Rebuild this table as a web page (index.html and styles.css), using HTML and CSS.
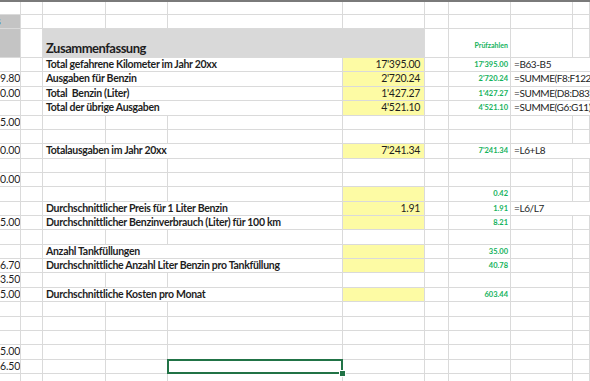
FILE: index.html
```html
<!DOCTYPE html>
<html lang="de">
<head>
    <meta charset="UTF-8">
    <title>Zusammenfassung</title>
    <link rel="stylesheet" href="styles.css">
</head>
<body>
    <div class="sheet">
        <div class="row">
            <div class="c"></div><div class="c"></div><div class="c"></div><div class="c"></div><div class="c"></div>
            <div class="c"></div><div class="c"></div><div class="c"></div><div class="c"></div><div class="c"></div>
        </div>
        <div class="row">
            <div class="c gray cut">s</div><div class="c"></div><div class="c"></div><div class="c"></div><div class="c"></div>
            <div class="c"></div><div class="c"></div><div class="c"></div><div class="c"></div><div class="c"></div>
        </div>
        <div class="row tall">
            <div class="c gray"></div><div class="c"></div>
            <div class="c span4 head">Zusammenfassung</div>
            <div class="c"></div><div class="c check small">Prüfzahlen</div><div class="c"></div><div class="c"></div>
        </div>

        <div class="row">
            <div class="c col-a"></div><div class="c"></div>
            <div class="c span3 label">Total gefahrene Kilometer im Jahr 20xx</div>
            <div class="c yellow num">17'395.00</div><div class="c"></div>
            <div class="c check">17'395.00</div><div class="c span2 formula">=B63-B5</div>
        </div>
        <div class="row">
            <div class="c col-a">9.80</div><div class="c"></div>
            <div class="c span3 label">Ausgaben für Benzin</div>
            <div class="c yellow num">2'720.24</div><div class="c"></div>
            <div class="c check">2'720.24</div><div class="c span2 formula">=SUMME(F8:F122)</div>
        </div>
        <div class="row">
            <div class="c col-a">0.00</div><div class="c"></div>
            <div class="c span3 label">Total&nbsp; Benzin (Liter)</div>
            <div class="c yellow num">1'427.27</div><div class="c"></div>
            <div class="c check">1'427.27</div><div class="c span2 formula">=SUMME(D8:D83)</div>
        </div>
        <div class="row">
            <div class="c col-a"></div><div class="c"></div>
            <div class="c span3 label">Total der übrige Ausgaben</div>
            <div class="c yellow num">4'521.10</div><div class="c"></div>
            <div class="c check">4'521.10</div><div class="c span2 formula">=SUMME(G6:G11)</div>
        </div>
        <div class="row">
            <div class="c col-a">5.00</div><div class="c"></div><div class="c"></div><div class="c"></div><div class="c"></div>
            <div class="c"></div><div class="c"></div><div class="c"></div><div class="c"></div><div class="c"></div>
        </div>
        <div class="row">
            <div class="c col-a"></div><div class="c"></div><div class="c"></div><div class="c"></div><div class="c"></div>
            <div class="c"></div><div class="c"></div><div class="c"></div><div class="c"></div><div class="c"></div>
        </div>
        <div class="row">
            <div class="c col-a">0.00</div><div class="c"></div>
            <div class="c span3 label">Totalausgaben im Jahr 20xx</div>
            <div class="c yellow num">7'241.34</div><div class="c"></div>
            <div class="c check">7'241.34</div><div class="c span2 formula">=L6+L8</div>
        </div>
        <div class="row">
            <div class="c col-a"></div><div class="c"></div><div class="c"></div><div class="c"></div><div class="c"></div>
            <div class="c"></div><div class="c"></div><div class="c"></div><div class="c"></div><div class="c"></div>
        </div>
        <div class="row">
            <div class="c col-a">0.00</div><div class="c"></div><div class="c"></div><div class="c"></div><div class="c"></div>
            <div class="c"></div><div class="c"></div><div class="c"></div><div class="c"></div><div class="c"></div>
        </div>
        <div class="row">
            <div class="c col-a"></div><div class="c"></div><div class="c"></div><div class="c"></div><div class="c"></div>
            <div class="c yellow"></div><div class="c"></div>
            <div class="c check">0.42</div><div class="c"></div><div class="c"></div>
        </div>
        <div class="row">
            <div class="c col-a"></div><div class="c"></div>
            <div class="c span3 label">Durchschnittlicher Preis für 1 Liter Benzin</div>
            <div class="c yellow num">1.91</div><div class="c"></div>
            <div class="c check">1.91</div><div class="c span2 formula">=L6/L7</div>
        </div>
        <div class="row">
            <div class="c col-a">5.00</div><div class="c"></div>
            <div class="c span3 label">Durchschnittlicher Benzinverbrauch (Liter) für 100 km</div>
            <div class="c yellow"></div><div class="c"></div>
            <div class="c check">8.21</div><div class="c"></div><div class="c"></div>
        </div>
        <div class="row">
            <div class="c col-a"></div><div class="c"></div><div class="c"></div><div class="c"></div><div class="c"></div>
            <div class="c"></div><div class="c"></div><div class="c"></div><div class="c"></div><div class="c"></div>
        </div>
        <div class="row">
            <div class="c col-a"></div><div class="c"></div>
            <div class="c span3 label">Anzahl Tankfüllungen</div>
            <div class="c yellow"></div><div class="c"></div>
            <div class="c check">35.00</div><div class="c"></div><div class="c"></div>
        </div>
        <div class="row">
            <div class="c col-a">6.70</div><div class="c"></div>
            <div class="c span3 label">Durchschnittliche Anzahl Liter Benzin pro Tankfüllung</div>
            <div class="c yellow"></div><div class="c"></div>
            <div class="c check">40.78</div><div class="c"></div><div class="c"></div>
        </div>
        <div class="row">
            <div class="c col-a">3.50</div><div class="c"></div><div class="c"></div><div class="c"></div><div class="c"></div>
            <div class="c"></div><div class="c"></div><div class="c"></div><div class="c"></div><div class="c"></div>
        </div>
        <div class="row">
            <div class="c col-a">5.00</div><div class="c"></div>
            <div class="c span3 label">Durchschnittliche Kosten pro Monat</div>
            <div class="c yellow"></div><div class="c"></div>
            <div class="c check">603.44</div><div class="c"></div><div class="c"></div>
        </div>
        <div class="row">
            <div class="c col-a"></div><div class="c"></div><div class="c"></div><div class="c"></div><div class="c"></div>
            <div class="c"></div><div class="c"></div><div class="c"></div><div class="c"></div><div class="c"></div>
        </div>
        <div class="row">
            <div class="c col-a"></div><div class="c"></div><div class="c"></div><div class="c"></div><div class="c"></div>
            <div class="c"></div><div class="c"></div><div class="c"></div><div class="c"></div><div class="c"></div>
        </div>
        <div class="row">
            <div class="c col-a"></div><div class="c"></div><div class="c"></div><div class="c"></div><div class="c"></div>
            <div class="c"></div><div class="c"></div><div class="c"></div><div class="c"></div><div class="c"></div>
        </div>
        <div class="row">
            <div class="c col-a">5.00</div><div class="c"></div><div class="c"></div><div class="c"></div><div class="c"></div>
            <div class="c"></div><div class="c"></div><div class="c"></div><div class="c"></div><div class="c"></div>
        </div>
        <div class="row">
            <div class="c col-a">6.50</div><div class="c"></div><div class="c"></div><div class="c"></div>
            <div class="c selected"><span class="handle"></span></div>
            <div class="c"></div><div class="c"></div><div class="c"></div><div class="c"></div><div class="c"></div>
        </div>
        <div class="row">
            <div class="c col-a"></div><div class="c"></div><div class="c"></div><div class="c"></div><div class="c"></div>
            <div class="c"></div><div class="c"></div><div class="c"></div><div class="c"></div><div class="c"></div>
        </div>
    </div>
</body>
</html>
```

FILE: styles.css
```css
body {
    margin: 0;
    background: white;
    font-family: Lato, "Open Sans", sans-serif;
    color: #1e1e1e;
    overflow: hidden;
}

.sheet {
    width: 590px;
    height: 381px;
    overflow: hidden;
    border-top: 2px solid #7a7a7a;
    box-sizing: border-box;
}

.row {
    display: grid;
    grid-template-columns: 21px 22px 63px 62px 175px 82px 24px 62px 62px 17px;
    height: 14.36px;
}

.row:first-child {
    height: 13px;
}

.row.tall {
    height: 28.72px;
}

.c {
    border-right: 1px solid #dadada;
    border-bottom: 1px solid #dadada;
    box-sizing: border-box;
    overflow: hidden;
    white-space: nowrap;
    font-size: 10.5px;
    letter-spacing: -0.3px;
    line-height: 13px;
    padding: 0 3px;
    position: relative;
}

.span2 { grid-column: span 2; }
.span3 { grid-column: span 3; }
.span4 { grid-column: span 4; }

.col-a {
    text-align: right;
    padding: 0 2px 0 0;
    letter-spacing: -0.1px;
}

.gray {
    background: #c4c4c4;
}

.cut {
    text-indent: -4px;
    padding: 0;
    color: #1f5fb8;
    font-weight: bold;
}

.head {
    background: #d9d9d9;
    font-size: 13px;
    letter-spacing: -0.5px;
    font-weight: bold;
    display: flex;
    align-items: flex-end;
    padding-bottom: 2px;
}

.label {
    font-weight: bold;
}

.yellow {
    background: #fdfba4;
}

.num {
    text-align: right;
    padding-right: 4px;
}

.check {
    color: #14b25c;
    font-weight: bold;
    font-size: 7.5px;
    letter-spacing: 0;
    text-align: right;
    padding-right: 2px;
}

.check.small {
    display: flex;
    align-items: flex-end;
    justify-content: flex-end;
    font-size: 7px;
    padding-bottom: 5px;
}

.formula {
    border-right: none;
    padding-left: 3px;
    font-size: 10px;
    letter-spacing: -0.4px;
}

.selected {
    overflow: visible;
}

.selected::after {
    content: "";
    position: absolute;
    left: -1px;
    top: -1px;
    right: -1px;
    bottom: -1px;
    border: 2px solid #217346;
}

.handle {
    position: absolute;
    right: -4px;
    bottom: -4px;
    width: 5px;
    height: 5px;
    background: #217346;
    border: 1px solid white;
    z-index: 1;
}
```
